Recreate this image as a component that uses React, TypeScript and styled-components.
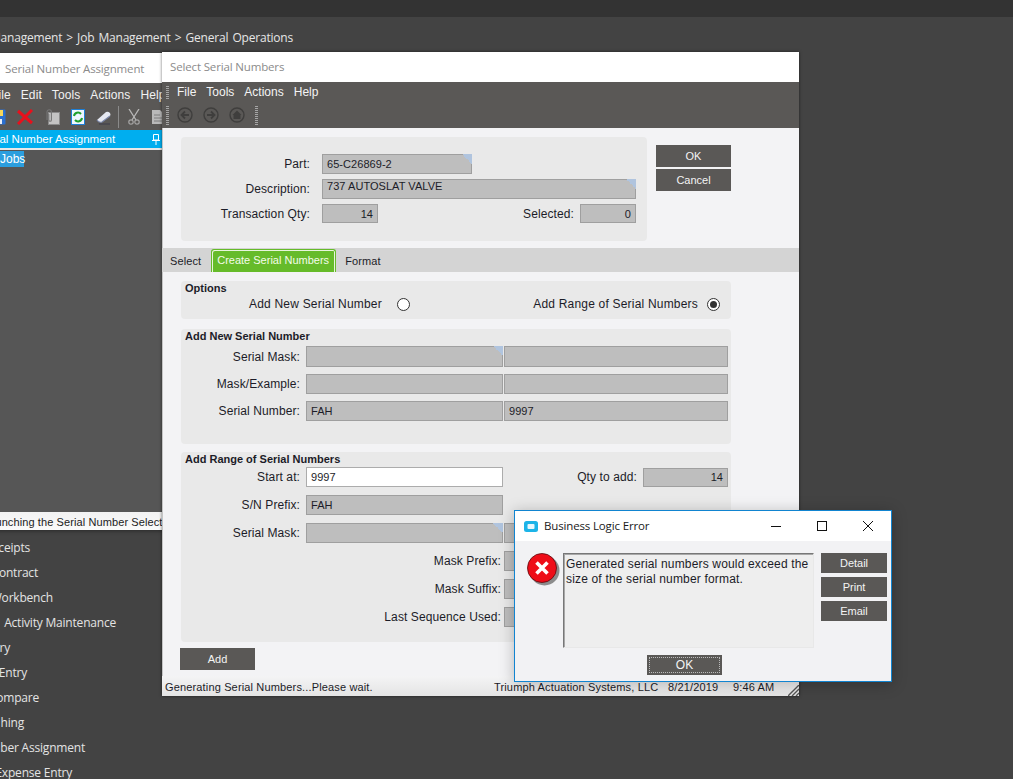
import styled, { createGlobalStyle } from "styled-components";

const GlobalStyle = createGlobalStyle`
    html, body {
        margin: 0;
        padding: 0;
        background: #434343;
    }
    * {
        box-sizing: border-box;
    }
`;

const menuItems = [
    { text: "Receipts", end: 30 },
    { text: "Contract", end: 38 },
    { text: "Workbench", end: 53 },
    { text: "Activity Maintenance", end: 116 },
    { text: "ry", end: 10 },
    { text: "Entry", end: 27 },
    { text: "Compare", end: 39 },
    { text: "hing", end: 24 },
    { text: "Number Assignment", end: 85 },
    { text: "Expense Entry", end: 72 },
];

function SaveIcon() {
    return (
        <svg width="16" height="16" viewBox="0 0 16 16">
            <rect x="0.5" y="0.5" width="15" height="15" rx="1" fill="#2a6fd0" />
            <rect x="3" y="1" width="10" height="6" fill="#f6d65a" />
            <rect x="4" y="10" width="8" height="5" fill="#e8eef8" />
        </svg>
    );
}

function DeleteIcon() {
    return (
        <svg width="16" height="16" viewBox="0 0 16 16">
            <path d="M1 2 L15 14 M15 1 L1 15" stroke="#e8101c" strokeWidth="3" fill="none" />
        </svg>
    );
}

function ClipIcon() {
    return (
        <svg width="16" height="16" viewBox="0 0 16 16">
            <rect x="4.5" y="3.5" width="11" height="12" fill="#c4c4c4" stroke="#8c8c8c" />
            <path d="M3 11 V3 a2.2 2.2 0 0 1 4.4 0 V11 a1.3 1.3 0 0 1 -2.6 0 V5" stroke="#767676" strokeWidth="1.1" fill="none" />
        </svg>
    );
}

function RefreshIcon() {
    return (
        <svg width="14" height="16" viewBox="0 0 14 16">
            <rect x="0.5" y="0.5" width="13" height="15" fill="#eef6ff" stroke="#1d7fd6" />
            <path d="M3 7 a4 4 0 0 1 7 -2 M11 9 a4 4 0 0 1 -7 2" stroke="#1ea02c" strokeWidth="2" fill="none" />
        </svg>
    );
}

function EraserIcon() {
    return (
        <svg width="16" height="16" viewBox="0 0 16 16">
            <path d="M1 11 L10 3 Q12 2 14 4 Q15 6 14 7 L6 13 Q3 14 1 11 Z" fill="#e6e9f2" />
            <path d="M1 11 Q3 14 6 13 L14 7" stroke="#7a86a8" strokeWidth="1.2" fill="none" />
            <path d="M3 15 H14" stroke="#3d3d4a" />
        </svg>
    );
}

function ScissorsIcon() {
    return (
        <svg width="12" height="16" viewBox="0 0 12 16">
            <path d="M1 0 L8 11 M11 0 L4 11" stroke="#b8b8b8" strokeWidth="1.3" fill="none" />
            <circle cx="3" cy="13" r="2.2" stroke="#a4a4a4" strokeWidth="1.2" fill="none" />
            <circle cx="9" cy="13" r="2.2" stroke="#a4a4a4" strokeWidth="1.2" fill="none" />
        </svg>
    );
}

function PasteIcon() {
    return (
        <svg width="14" height="16" viewBox="0 0 14 16">
            <path d="M1 1 H9 L13 5 V15 H1 Z" fill="#b9b9b9" />
            <path d="M3 6 H9 M3 9 H11 M3 12 H11" stroke="#7c7c7c" />
        </svg>
    );
}

function PinIcon() {
    return (
        <svg width="8" height="11" viewBox="0 0 8 11">
            <path d="M1.5 0.5 H6.5 V6 H1.5 Z M0 6.5 H8 M4 6.5 V11" stroke="#fff" fill="none" />
        </svg>
    );
}

function BackIcon() {
    return (
        <svg width="16" height="16" viewBox="0 0 16 16">
            <circle cx="8" cy="8" r="7" stroke="#3f3e3d" strokeWidth="1.4" fill="none" />
            <path d="M12 8 H4.5 M8 4.5 L4.5 8 L8 11.5" stroke="#3f3e3d" strokeWidth="1.8" fill="none" />
        </svg>
    );
}

function ForwardIcon() {
    return (
        <svg width="16" height="16" viewBox="0 0 16 16">
            <circle cx="8" cy="8" r="7" stroke="#3f3e3d" strokeWidth="1.4" fill="none" />
            <path d="M4 8 H11.5 M8 4.5 L11.5 8 L8 11.5" stroke="#3f3e3d" strokeWidth="1.8" fill="none" />
        </svg>
    );
}

function HomeIcon() {
    return (
        <svg width="16" height="16" viewBox="0 0 16 16">
            <circle cx="8" cy="8" r="7" stroke="#3f3e3d" strokeWidth="1.4" fill="none" />
            <path d="M8 3.5 L12.5 8 H11.5 V12 H4.5 V8 H3.5 Z" fill="#3f3e3d" />
        </svg>
    );
}

function AppIcon() {
    return (
        <svg width="14" height="11" viewBox="0 0 14 11">
            <rect width="14" height="11" rx="2.5" fill="#1cb4e8" />
            <rect x="3.5" y="3" width="7" height="5" rx="1" fill="#e8f8fe" />
        </svg>
    );
}

function ErrorIcon() {
    return (
        <svg width="34" height="34" viewBox="0 0 34 34">
            <circle cx="17.5" cy="17.5" r="15" fill="#8c8c8c" />
            <circle cx="15" cy="15" r="14.5" fill="#ee0d18" stroke="#5a0a0e" strokeWidth="0.8" />
            <path d="M9.5 9.5 L20.5 20.5 M20.5 9.5 L9.5 20.5" stroke="#fff" strokeWidth="3.6" />
        </svg>
    );
}

function WindowControl({ kind }: { kind: "min" | "max" | "close" }) {
    return (
        <svg width="12" height="12" viewBox="0 0 12 12">
            {kind === "min" && <path d="M1 6.5 H11" stroke="#111" />}
            {kind === "max" && <rect x="1.5" y="1.5" width="9" height="9" stroke="#111" fill="none" />}
            {kind === "close" && <path d="M1 1 L11 11 M11 1 L1 11" stroke="#111" />}
        </svg>
    );
}

function ResizeGrip() {
    return (
        <svg width="11" height="11" viewBox="0 0 11 11">
            <path d="M0 11 L11 0 M4 11 L11 4 M8 11 L11 8" stroke="#555" strokeWidth="1.4" />
        </svg>
    );
}

export default function App() {
    return (
        <>
            <GlobalStyle />
            <Desktop>
                <TopBar />
                <Breadcrumb>
                    <span>Management &gt; Job Management &gt; General Operations</span>
                </Breadcrumb>

                <BackWindow>
                    <BackTitle>Serial Number Assignment</BackTitle>
                    <BackMenu>
                        <span>File</span>
                        <span>Edit</span>
                        <span>Tools</span>
                        <span>Actions</span>
                        <span>Help</span>
                    </BackMenu>
                    <BackToolbar>
                        <SaveIcon />
                        <DeleteIcon />
                        <ClipIcon />
                        <RefreshIcon />
                        <EraserIcon />
                        <ToolSeparator />
                        <ScissorsIcon />
                        <PasteIcon />
                    </BackToolbar>
                    <PanelHeader>
                        <span>Serial Number Assignment</span>
                        <PinIcon />
                    </PanelHeader>
                    <TreeArea>
                        <TreeItem>Jobs</TreeItem>
                    </TreeArea>
                    <BackStatus>Launching the Serial Number Selection</BackStatus>
                </BackWindow>

                <MenuList>
                    {menuItems.map((item) => (
                        <MenuItem key={item.text} $end={item.end}>
                            <span>{item.text}</span>
                        </MenuItem>
                    ))}
                </MenuList>

                <SelectWindow>
                    <WindowTitle>Select Serial Numbers</WindowTitle>
                    <MenuBar>
                        <MenuRow>
                            <Grip $height={13} />
                            <span>File</span>
                            <span>Tools</span>
                            <span>Actions</span>
                            <span>Help</span>
                        </MenuRow>
                        <NavRow>
                            <Grip $height={19} />
                            <BackIcon />
                            <ForwardIcon />
                            <HomeIcon />
                            <Grip $height={19} />
                        </NavRow>
                    </MenuBar>

                    <Header>
                        <HeaderPanel>
                            <TopRow>
                                <TopLabel>Part:</TopLabel>
                                <Field $width={150} $corner>65-C26869-2</Field>
                            </TopRow>
                            <TopRow>
                                <TopLabel>Description:</TopLabel>
                                <Field $width={314} $corner $top>737 AUTOSLAT VALVE</Field>
                            </TopRow>
                            <TopRow>
                                <TopLabel>Transaction Qty:</TopLabel>
                                <Field $width={56} $right $height={19}>14</Field>
                                <SideLabel>Selected:</SideLabel>
                                <Field $width={56} $right $height={19}>0</Field>
                            </TopRow>
                        </HeaderPanel>
                        <ButtonColumn>
                            <DarkButton>OK</DarkButton>
                            <DarkButton>Cancel</DarkButton>
                        </ButtonColumn>
                    </Header>

                    <TabBar>
                        <Tab>Select</Tab>
                        <ActiveTab>Create Serial Numbers</ActiveTab>
                        <Tab>Format</Tab>
                    </TabBar>

                    <Content>
                        <OptionsPanel>
                            <SectionTitle>Options</SectionTitle>
                            <OptionsRow>
                                <Option $gap={15}>
                                    Add New Serial Number
                                    <Radio />
                                </Option>
                                <Option $gap={9}>
                                    Add Range of Serial Numbers
                                    <Radio $checked />
                                </Option>
                            </OptionsRow>
                        </OptionsPanel>

                        <NewPanel>
                            <SectionTitle>Add New Serial Number</SectionTitle>
                            <FormRows $gap={7}>
                                <FormRow>
                                    <FormLabel>Serial Mask:</FormLabel>
                                    <Field $width={197} $height={21} $corner />
                                    <Field $width={224} $height={21} />
                                </FormRow>
                                <FormRow>
                                    <FormLabel>Mask/Example:</FormLabel>
                                    <Field $width={197} />
                                    <Field $width={224} />
                                </FormRow>
                                <FormRow>
                                    <FormLabel>Serial Number:</FormLabel>
                                    <Field $width={197}>FAH</Field>
                                    <Field $width={224}>9997</Field>
                                </FormRow>
                            </FormRows>
                        </NewPanel>

                        <RangePanel>
                            <SectionTitle>Add Range of Serial Numbers</SectionTitle>
                            <FormRows $gap={8}>
                                <FormRow>
                                    <FormLabel>Start at:</FormLabel>
                                    <Field $width={197} $input>9997</Field>
                                    <RangeSideLabel>Qty to add:</RangeSideLabel>
                                    <Field $width={85} $height={19} $right>14</Field>
                                </FormRow>
                                <FormRow>
                                    <FormLabel>S/N Prefix:</FormLabel>
                                    <Field $width={197}>FAH</Field>
                                </FormRow>
                                <FormRow>
                                    <FormLabel>Serial Mask:</FormLabel>
                                    <Field $width={197} $corner />
                                    <Field $width={224} />
                                </FormRow>
                                <FormRow>
                                    <WideLabel>Mask Prefix:</WideLabel>
                                    <Field $width={60} />
                                </FormRow>
                                <FormRow>
                                    <WideLabel>Mask Suffix:</WideLabel>
                                    <Field $width={60} />
                                </FormRow>
                                <FormRow>
                                    <WideLabel>Last Sequence Used:</WideLabel>
                                    <Field $width={60} />
                                </FormRow>
                            </FormRows>
                        </RangePanel>

                        <AddButton>Add</AddButton>
                    </Content>

                    <StatusBar>
                        <StatusMessage>Generating Serial Numbers...Please wait.</StatusMessage>
                        <StatusCompany>Triumph Actuation Systems, LLC</StatusCompany>
                        <StatusDate>8/21/2019</StatusDate>
                        <StatusTime>9:46 AM</StatusTime>
                        <GripCorner>
                            <ResizeGrip />
                        </GripCorner>
                    </StatusBar>
                </SelectWindow>

                <ErrorDialog>
                    <DialogTitle>
                        <AppIcon />
                        <DialogCaption>Business Logic Error</DialogCaption>
                        <DialogControls>
                            <WindowControl kind="min" />
                            <WindowControl kind="max" />
                            <WindowControl kind="close" />
                        </DialogControls>
                    </DialogTitle>
                    <DialogBody>
                        <ErrorIcon />
                        <MessageBox>Generated serial numbers would exceed the size of the serial number format.</MessageBox>
                        <DialogButtons>
                            <DialogButton>Detail</DialogButton>
                            <DialogButton>Print</DialogButton>
                            <DialogButton>Email</DialogButton>
                        </DialogButtons>
                    </DialogBody>
                    <DialogFooter>
                        <FocusedButton>
                            <span>OK</span>
                        </FocusedButton>
                    </DialogFooter>
                </ErrorDialog>
            </Desktop>
        </>
    );
}

const Desktop = styled.div`
    position: relative;
    display: flex;
    flex-direction: column;
    width: 1013px;
    height: 779px;
    overflow: hidden;
    background: #434343;
    font-family: "Liberation Sans", Arial, sans-serif;
    font-size: 12px;
    color: #1c1c28;
`;

const TopBar = styled.div`
    height: 17px;
    flex: none;
    background: #333333;
`;

const Breadcrumb = styled.div`
    display: flex;
    justify-content: flex-end;
    align-items: center;
    flex: none;
    width: 293px;
    height: 36px;
    padding-top: 4px;
    font-family: "Open Sans", sans-serif;
    font-size: 12px;
    letter-spacing: -0.2px;
    word-spacing: 1.2px;
    color: #e6e6e6;
    white-space: nowrap;
`;

const BackWindow = styled.div`
    display: flex;
    flex-direction: column;
    flex: none;
    width: 240px;
    height: 477px;
    margin-left: -40px;
    background: #565656;
    box-shadow: 0 1px 4px rgba(0, 0, 0, 0.4);
`;

const BackTitle = styled.div`
    display: flex;
    align-items: center;
    height: 30px;
    padding-left: 45px;
    background: #fff;
    font-family: "Open Sans", sans-serif;
    font-size: 11.5px;
    letter-spacing: -0.15px;
    color: #8b8b8b;
`;

const BackMenu = styled.div`
    display: flex;
    align-items: center;
    gap: 10px;
    height: 24px;
    padding-left: 31px;
    background: #5a5856;
    letter-spacing: 0.1px;
    color: #f2f2f2;
`;

const BackToolbar = styled.div`
    display: flex;
    align-items: center;
    gap: 11px;
    height: 23px;
    padding: 0 0 3px 30px;
    background: #5a5856;
`;

const ToolSeparator = styled.div`
    width: 1px;
    height: 22px;
    margin: 0 -2px 0 -5px;
    background: #8a8a8a;
`;

const PanelHeader = styled.div`
    display: flex;
    align-items: center;
    justify-content: space-between;
    height: 18px;
    padding: 0 40px 0 19px;
    background: #00aeef;
    font-size: 11.5px;
    color: #fff;
    white-space: nowrap;
`;

const TreeArea = styled.div`
    flex: 1;
    border-top: 2px solid #e8e8e8;
    padding: 1px 0 0 40px;
`;

const TreeItem = styled.span`
    display: inline-block;
    width: 24px;
    height: 16px;
    padding-top: 1px;
    background: #2b9ede;
    color: #fff;
`;

const BackStatus = styled.div`
    display: flex;
    align-items: flex-end;
    height: 18px;
    padding: 0 0 2px 23px;
    background: linear-gradient(#f2f2f2, #fafafa);
    font-size: 11px;
    letter-spacing: 0.1px;
    color: #222;
    white-space: nowrap;
    overflow: hidden;
`;

const MenuList = styled.div`
    display: flex;
    flex-direction: column;
    flex: none;
    padding-top: 5px;
`;

const MenuItem = styled.div<{ $end: number }>`
    display: flex;
    justify-content: flex-end;
    align-items: center;
    width: ${(props) => props.$end}px;
    height: 25px;
    font-family: "Open Sans", sans-serif;
    font-size: 12px;
    letter-spacing: -0.2px;
    color: #e4e4e4;
    white-space: nowrap;
`;

const SelectWindow = styled.div`
    position: absolute;
    left: 162px;
    top: 52px;
    display: flex;
    flex-direction: column;
    width: 637px;
    height: 644px;
    background: #f3f3f5;
    box-shadow: 0 0 3px rgba(0, 0, 0, 0.55), inset 1px 0 0 #c4c4c4;
`;

const WindowTitle = styled.div`
    display: flex;
    align-items: center;
    flex: none;
    height: 30px;
    padding: 0 0 1px 8px;
    background: #fff;
    font-family: "Open Sans", sans-serif;
    font-size: 11.5px;
    letter-spacing: -0.15px;
    color: #8b8b8b;
`;

const MenuBar = styled.div`
    display: flex;
    flex-direction: column;
    flex: none;
    height: 46px;
    background: #5a5856;
`;

const MenuRow = styled.div`
    display: flex;
    align-items: center;
    gap: 10px;
    height: 23px;
    padding: 0 0 3px 4px;
    color: #f4f4f4;
    & > span:first-of-type {
        margin-left: -4px;
    }
`;

const NavRow = styled.div`
    display: flex;
    align-items: center;
    gap: 10px;
    height: 23px;
    padding: 0 0 3px 4px;
    & > svg:first-of-type {
        margin-left: -4px;
    }
`;

const Grip = styled.div<{ $height: number }>`
    width: 3px;
    height: ${(props) => props.$height}px;
    margin-right: 2px;
    background: repeating-linear-gradient(#a5a5a5 0 1px, #5a5856 1px 2px);
`;

const Header = styled.div`
    display: flex;
    flex: none;
    height: 113px;
    padding: 9px 0 0 19px;
`;

const HeaderPanel = styled.div`
    display: flex;
    flex-direction: column;
    gap: 5px;
    width: 466px;
    height: 104px;
    padding: 17px 11px 0 0;
    border-radius: 4px;
    background: #e9e9e9;
`;

const TopRow = styled.div`
    display: flex;
    align-items: center;
`;

const TopLabel = styled.div`
    width: 129px;
    margin-right: 12px;
    letter-spacing: 0.1px;
    text-align: right;
`;

const SideLabel = styled.div`
    margin-left: auto;
    margin-right: 6px;
    letter-spacing: 0.1px;
`;

const RangeSideLabel = styled(SideLabel)`
    margin-right: 5px;
`;

const Field = styled.div<{ $width: number; $height?: number; $corner?: boolean; $right?: boolean; $top?: boolean; $input?: boolean }>`
    position: relative;
    display: flex;
    align-items: ${(props) => (props.$top ? "flex-start" : "center")};
    justify-content: ${(props) => (props.$right ? "flex-end" : "flex-start")};
    flex: none;
    width: ${(props) => props.$width}px;
    height: ${(props) => props.$height ?? 20}px;
    padding: 0 4px;
    border: 1px solid ${(props) => (props.$input ? "#acacac" : "#9f9f9f")};
    background: ${(props) => (props.$input ? "#fff" : "#bebebe")};
    font-size: 11px;
    letter-spacing: 0.05px;
    color: #1c1c28;
    ${(props) =>
        props.$corner &&
        `&::after {
            content: "";
            position: absolute;
            top: -1px;
            right: -1px;
            width: 10px;
            height: 10px;
            background: linear-gradient(to top right, transparent 50%, #b0c4de 50%);
        }`}
`;

const ButtonColumn = styled.div`
    display: flex;
    flex-direction: column;
    gap: 2px;
    margin: 8px 0 0 9px;
`;

const DarkButton = styled.div`
    display: flex;
    align-items: center;
    justify-content: center;
    width: 75px;
    height: 22px;
    background: #5a5856;
    font-size: 11px;
    color: #f4f4f4;
`;

const TabBar = styled.div`
    display: flex;
    align-items: flex-end;
    flex: none;
    height: 24px;
    margin-top: 7px;
    padding-left: 2px;
    background: #d4d4d4;
`;

const Tab = styled.div`
    display: flex;
    align-items: center;
    height: 24px;
    padding: 1px 6px 0;
    margin-right: 4px;
    font-size: 11px;
    letter-spacing: 0.1px;
    color: #1c1c28;
`;

const ActiveTab = styled.div`
    display: flex;
    align-items: flex-start;
    flex: none;
    width: 125px;
    height: 23px;
    margin-right: 3px;
    padding: 4px 5px 0;
    border: 1px solid #66bb2a;
    border-bottom: 0;
    border-radius: 3px 3px 0 0;
    background: #66bb2a;
    box-shadow: inset 1px 1px 0 #e8f5dc, inset -1px 0 0 #e8f5dc;
    font-size: 11px;
    white-space: nowrap;
    color: #f4fbe9;
`;

const Content = styled.div`
    display: flex;
    flex-direction: column;
    flex: none;
    padding: 9px 0 0 19px;
`;

const OptionsPanel = styled.div`
    width: 550px;
    height: 38px;
    border-radius: 4px;
    background: #e9e9e9;
`;

const SectionTitle = styled.div`
    height: 17px;
    padding-left: 4px;
    font-size: 11px;
    font-weight: bold;
    line-height: 14px;
    color: #1c1c28;
`;

const OptionsRow = styled.div`
    display: flex;
    justify-content: space-between;
    margin-top: -1px;
    padding: 0 11px 0 68px;
`;

const Option = styled.div<{ $gap: number }>`
    display: flex;
    align-items: center;
    gap: ${(props) => props.$gap}px;
    letter-spacing: 0.2px;
`;

const Radio = styled.span<{ $checked?: boolean }>`
    position: relative;
    width: 13px;
    height: 13px;
    border: 1px solid #333;
    border-radius: 50%;
    background: #fff;
    ${(props) =>
        props.$checked &&
        `&::after {
            content: "";
            position: absolute;
            left: 2px;
            top: 2px;
            width: 7px;
            height: 7px;
            border-radius: 50%;
            background: #333;
        }`}
`;

const NewPanel = styled.div`
    width: 550px;
    height: 115px;
    margin-top: 10px;
    border-radius: 4px;
    background: #e9e9e9;
`;

const RangePanel = styled.div`
    width: 550px;
    height: 190px;
    margin-top: 8px;
    border-radius: 4px;
    background: #e9e9e9;
    & > div:first-child {
        height: 15px;
    }
`;

const FormRows = styled.div<{ $gap: number }>`
    display: flex;
    flex-direction: column;
    gap: ${(props) => props.$gap}px;
`;

const FormRow = styled.div`
    display: flex;
    align-items: center;
    gap: 1px;
    padding-right: 3px;
`;

const FormLabel = styled.div`
    width: 119px;
    margin-right: 5px;
    letter-spacing: 0.1px;
    text-align: right;
`;

const WideLabel = styled.div`
    width: 320px;
    margin-right: 2px;
    letter-spacing: 0.1px;
    text-align: right;
`;

const AddButton = styled(DarkButton)`
    margin: 6px 0 0 -1px;
`;

const StatusBar = styled.div`
    position: relative;
    display: flex;
    align-items: center;
    flex: none;
    height: 20px;
    margin-top: 6px;
    padding: 1px 0 0 3px;
    background: linear-gradient(#f4f4f5, #e4e4e4);
    font-size: 11px;
    letter-spacing: 0.15px;
    white-space: nowrap;
`;

const StatusMessage = styled.div`
    width: 329px;
`;

const StatusCompany = styled.div`
    width: 174px;
`;

const StatusDate = styled.div`
    width: 65px;
`;

const StatusTime = styled.div``;

const GripCorner = styled.div`
    position: absolute;
    right: 0;
    bottom: 0;
    line-height: 0;
`;

const ErrorDialog = styled.div`
    position: absolute;
    left: 514px;
    top: 510px;
    display: flex;
    flex-direction: column;
    width: 378px;
    height: 172px;
    border: 1px solid #1184d0;
    background: #f2f2f4;
    box-shadow: 0 2px 14px rgba(0, 0, 0, 0.25);
`;

const DialogTitle = styled.div`
    display: flex;
    align-items: center;
    flex: none;
    height: 30px;
    padding-left: 9px;
    background: #fff;
`;

const DialogCaption = styled.div`
    margin: 0 0 1px 6px;
    font-family: "Open Sans", sans-serif;
    font-size: 11.5px;
    letter-spacing: -0.15px;
    color: #1a1a1a;
`;

const DialogControls = styled.div`
    display: flex;
    gap: 34px;
    margin-left: auto;
    padding-right: 17px;
`;

const DialogBody = styled.div`
    display: flex;
    align-items: flex-start;
    flex: none;
    height: 107px;
    padding: 12px 4px 0 12px;
    & > svg {
        flex: none;
    }
`;

const MessageBox = styled.div`
    flex: none;
    width: 251px;
    height: 95px;
    margin-left: 2px;
    padding: 3px 2px;
    border: 1px solid;
    border-color: #777 #e8e8e8 #e8e8e8 #777;
    background: #eeeeee;
    box-shadow: inset 1px 1px 0 #a8a8a8;
    letter-spacing: 0.17px;
    line-height: 15px;
    color: #1c1c28;
`;

const DialogButtons = styled.div`
    display: flex;
    flex-direction: column;
    gap: 4px;
    margin-left: 7px;
`;

const DialogButton = styled.div`
    display: flex;
    align-items: center;
    justify-content: center;
    width: 66px;
    height: 20px;
    background: #5a5856;
    font-size: 11px;
    color: #f4f4f4;
`;

const DialogFooter = styled.div`
    display: flex;
    padding: 7px 0 0 132px;
`;

const FocusedButton = styled.div`
    width: 75px;
    height: 20px;
    padding: 2px;
    background: #5a5856;
    font-size: 12px;
    color: #f4f4f4;
    & > span {
        display: flex;
        align-items: center;
        justify-content: center;
        height: 100%;
        border: 1px dotted #bbb;
    }
`;
